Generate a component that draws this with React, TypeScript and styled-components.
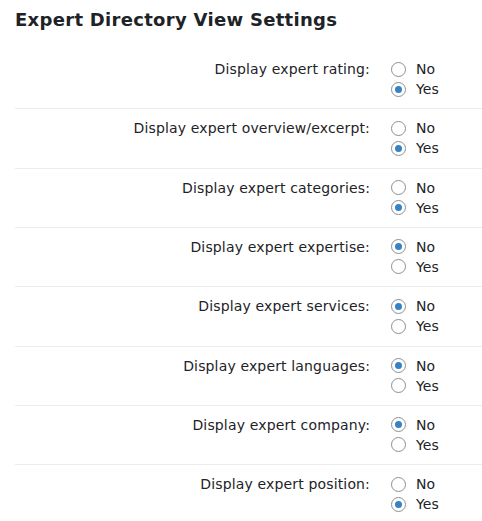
import React from 'react';
import styled, { createGlobalStyle } from 'styled-components';

const GlobalStyle = createGlobalStyle`
  body {
    margin: 0;
    background: #fff;
    font-family: 'DejaVu Sans', Verdana, sans-serif;
    color: #1d2327;
  }
`;

const Page = styled.main`
  padding: 8px 0 0 15px;
`;

const Title = styled.h2`
  margin: 0 0 19px;
  font-size: 18px;
  line-height: 23px;
  font-weight: bold;
  letter-spacing: 0.3px;
`;

const Table = styled.div`
  display: flex;
  flex-direction: column;
`;

const Row = styled.div<{ first?: boolean }>`
  display: grid;
  grid-template-columns: 376px 1fr;
  padding: 9px 0 9.33px;
  border-top: ${(p) => (p.first ? 'none' : '1px solid #ececec')};
`;

const Label = styled.div`
  text-align: right;
  padding-right: 21px;
  font-size: 14px;
  line-height: 20px;
  letter-spacing: 0.15px;
`;

const Options = styled.div`
  display: flex;
  flex-direction: column;
`;

const Option = styled.label`
  display: flex;
  align-items: center;
  gap: 10px;
  font-size: 14px;
  line-height: 20px;
  letter-spacing: 0.15px;
`;

const Radio = styled.span<{ checked?: boolean }>`
  position: relative;
  flex: none;
  width: 15px;
  height: 15px;
  box-sizing: border-box;
  border: 1px solid #8c8f94;
  border-radius: 50%;
  background: #fff;
  &::after {
    content: '';
    display: ${(p) => (p.checked ? 'block' : 'none')};
    position: absolute;
    left: 3px;
    top: 3px;
    width: 7px;
    height: 7px;
    border-radius: 50%;
    background: #3582c4;
  }
`;

const settings: [string, boolean][] = [
  ['Display expert rating:', true],
  ['Display expert overview/excerpt:', true],
  ['Display expert categories:', true],
  ['Display expert expertise:', false],
  ['Display expert services:', false],
  ['Display expert languages:', false],
  ['Display expert company:', false],
  ['Display expert position:', true],
];

const App = () => {
  return (
    <Page>
      <GlobalStyle />
      <Title>Expert Directory View Settings</Title>
      <Table>
        {settings.map(([label, yes], i) => (
          <Row key={label} first={i === 0}>
            <Label>{label}</Label>
            <Options>
              <Option>
                <Radio checked={!yes} />
                No
              </Option>
              <Option>
                <Radio checked={yes} />
                Yes
              </Option>
            </Options>
          </Row>
        ))}
      </Table>
    </Page>
  );
};

export default App;
